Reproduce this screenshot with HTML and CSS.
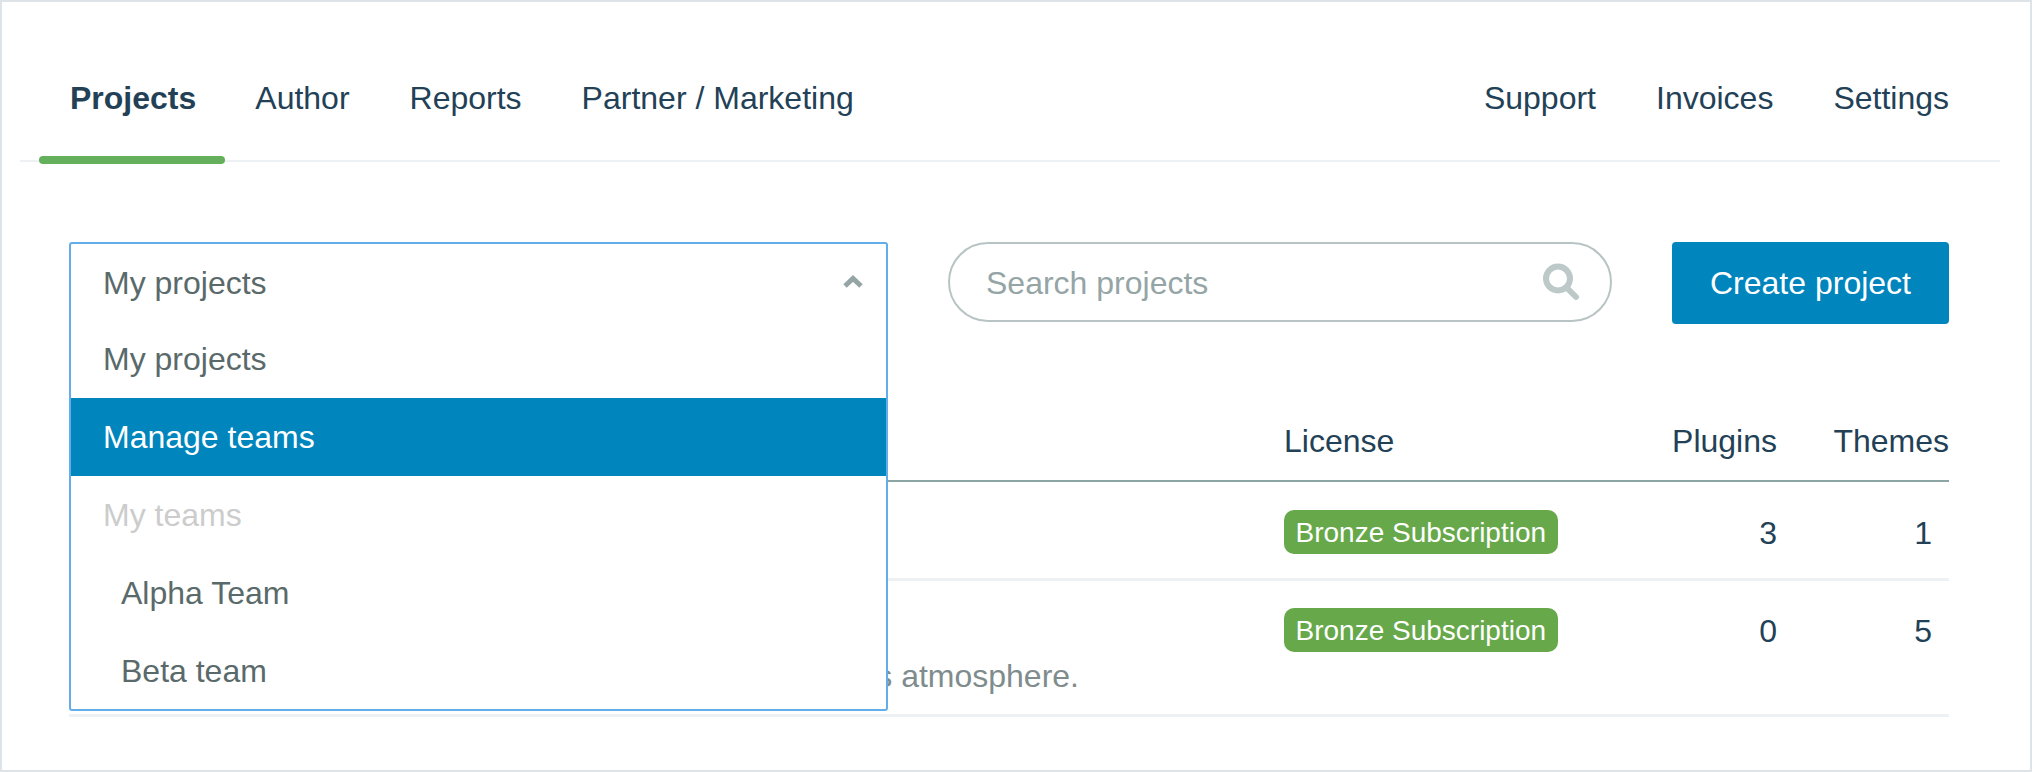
FILE: index.html
```html
<!DOCTYPE html>
<html lang="en">
<head>
<meta charset="UTF-8" />
<meta name="viewport" content="width=device-width, initial-scale=1" />
<title>Projects</title>
<link rel="stylesheet" href="styles.css">
</head>
<body>

<div class="frame">
  <nav class="tabs">
    <div class="tab-group">
      <a href="#" class="tab active">Projects</a>
      <a href="#" class="tab">Author</a>
      <a href="#" class="tab">Reports</a>
      <a href="#" class="tab">Partner / Marketing</a>
    </div>
    <div class="tab-group">
      <a href="#" class="tab">Support</a>
      <a href="#" class="tab">Invoices</a>
      <a href="#" class="tab">Settings</a>
    </div>
  </nav>

  <main class="content">
    <div class="toolbar">
      <div class="select-wrap">
        <!-- open dropdown lies over the table -->
        <div class="select">
          <div class="select-current">
            <span class="select-label">My projects</span>
            <svg class="chevron" width="22" height="14" viewBox="0 0 22 14">
              <path d="M3 11 L11 3.5 L19 11" fill="none" stroke="#95a5a6" stroke-width="5" />
            </svg>
          </div>
          <div class="option">My projects</div>
          <div class="option selected">Manage teams</div>
          <div class="option disabled">My teams</div>
          <div class="option nested">Alpha Team</div>
          <div class="option nested">Beta team</div>
        </div>
      </div>

      <div class="search">
        <span class="search-text">Search projects</span>
        <svg class="search-icon" width="38" height="38" viewBox="0 0 38 38">
          <circle cx="16" cy="15.5" r="12" fill="none" stroke="#bdc8c8" stroke-width="6" />
          <path d="M25 25 L34 34" fill="none" stroke="#bdc8c8" stroke-width="6" stroke-linecap="round" />
        </svg>
      </div>

      <a href="#" class="create-btn">Create project</a>
    </div>

    <table class="projects">
      <thead>
        <tr>
          <th class="col-name"></th>
          <th class="col-license">License</th>
          <th class="col-num">Plugins</th>
          <th class="col-num col-last">Themes</th>
        </tr>
      </thead>
      <tbody>
        <tr class="row-one">
          <td></td>
          <td><span class="badge">Bronze Subscription</span></td>
          <td class="num">3</td>
          <td class="num last">1</td>
        </tr>
        <tr class="row-two">
          <td class="desc-cell">
            <div class="project-desc">s atmosphere.</div>
          </td>
          <td><span class="badge">Bronze Subscription</span></td>
          <td class="num">0</td>
          <td class="num last">5</td>
        </tr>
      </tbody>
    </table>
  </main>
</div>

</body>
</html>
```

FILE: styles.css
```css
:root {
  --navy: #234156;
  --blue: #0085bd;
  --grey-text: #5a6a6a;
  --line: #edf1f3;
}
* {
  box-sizing: border-box;
}
body {
  margin: 0;
  background: #fff;
  font-family: "Liberation Sans", Arial, sans-serif;
  font-size: 32px;
  color: var(--navy);
}
.frame {
  height: 772px;
  border: 2px solid #dde3e7;
  overflow: hidden;
}

/* Top tabs */
.tabs {
  display: flex;
  justify-content: space-between;
  height: 160px;
  margin: 0 30px 0 18px;
  padding: 0 21px 0 20px;
  border-bottom: 2px solid var(--line);
}
.tab-group {
  display: flex;
}
.tab {
  position: relative;
  padding: 78px 30px 0;
  line-height: 36px;
  color: var(--navy);
  text-decoration: none;
}
.tab.active {
  padding-right: 29px;
  font-weight: bold;
}
.tab.active::after {
  content: "";
  position: absolute;
  left: -1px;
  right: 0;
  bottom: -4px;
  height: 8px;
  border-radius: 4px;
  background: #65b05c;
}

.content {
  padding: 80px 81px 0 67px;
}

/* Toolbar */
.toolbar {
  display: flex;
  gap: 60px;
  height: 82px;
}
.select-wrap {
  position: relative;
  width: 819px;
}
.select {
  position: absolute;
  top: 0;
  left: 0;
  z-index: 5;
  width: 100%;
  background: #fff;
  border: 2px solid #63aeea;
  border-radius: 3px;
  color: var(--grey-text);
}
.select-current {
  display: flex;
  justify-content: space-between;
  align-items: center;
  height: 76px;
  padding: 0 22px 0 32px;
}
.select-label {
  margin-top: 2px;
}
.option {
  height: 78px;
  padding: 0 32px;
  line-height: 78px;
}
.option.selected {
  background: var(--blue);
  color: #fff;
}
.option.disabled {
  color: #ccc;
}
.option.nested {
  padding-left: 50px;
}
.option:last-child {
  height: 77px;
}
.search {
  display: flex;
  justify-content: space-between;
  align-items: center;
  width: 664px;
  height: 80px;
  padding: 0 30px 0 36px;
  border: 2px solid #b8c4c4;
  border-radius: 40px;
  color: #95a5a6;
}
.search-text {
  margin-top: 3px;
}
.create-btn {
  width: 277px;
  height: 82px;
  background: var(--blue);
  border-radius: 4px;
  color: #fff;
  line-height: 83px;
  text-align: center;
  text-decoration: none;
}

/* Projects table */
.projects {
  width: 100%;
  margin-top: 76px;
  border-collapse: collapse;
  table-layout: fixed;
}
.projects th {
  height: 81px;
  padding: 2px 0 0;
  font-weight: normal;
  text-align: left;
  border-bottom: 2px solid #8aa5a3;
}
.col-name {
  width: 1215px;
}
.col-license {
  width: 300px;
}
.col-num {
  width: 193px;
}
.projects th.col-num {
  text-align: right;
}
.projects th.col-last {
  width: 172px;
}
.projects td {
  padding: 0;
  vertical-align: top;
  border-bottom: 3px solid var(--line);
}
.row-one td {
  height: 98px;
  padding-top: 28px;
}
.row-two td {
  height: 136px;
  padding-top: 27px;
}
.projects td.num {
  padding-top: 33px;
  text-align: right;
}
.projects .row-two td.num {
  padding-top: 32px;
}
.projects td.last {
  padding-right: 17px;
}
.projects td.desc-cell {
  padding: 77px 205px 0 0;
  text-align: right;
}
.project-desc {
  color: #7f8c8d;
}
.badge {
  display: inline-block;
  height: 44px;
  padding: 0 11.5px;
  border-radius: 10px;
  background: #66a84a;
  color: #fff;
  font-size: 28px;
  line-height: 46px;
}
```
